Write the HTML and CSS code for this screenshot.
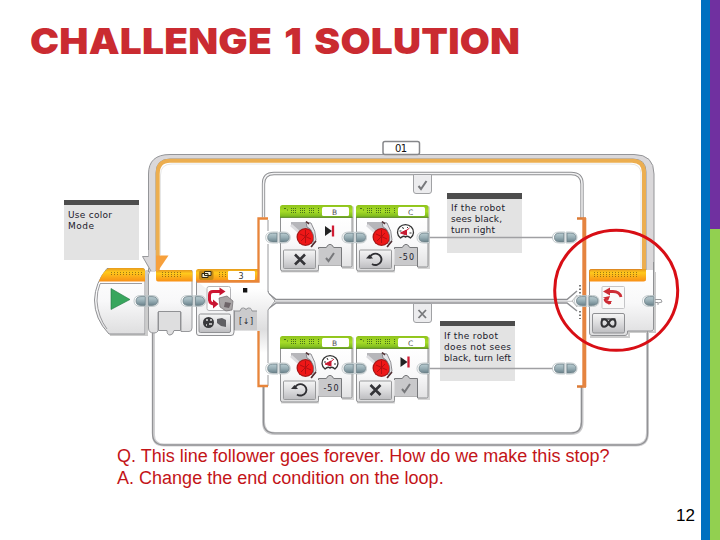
FILE: index.html
```html
<!DOCTYPE html>
<html lang="en">

<head>
    <meta charset="UTF-8">
    <meta name="viewport" content="width=device-width, initial-scale=1.0">
    <title>Challenge 1 Solution</title>
    <link rel="stylesheet" href="styles.css">
</head>

<body>
    <div class="slide">
        <main class="content">
            <h1 class="title">CHALLENGE 1 SOLUTION</h1>

            <svg class="program" viewBox="0 130 701 318" width="701" height="318">
                <defs>
                    <linearGradient id="orange" x1="0" y1="0" x2="0" y2="1">
                        <stop offset="0" stop-color="#e79a1c" />
                        <stop offset="0.3" stop-color="#ffc91c" />
                        <stop offset="1" stop-color="#f98f16" />
                    </linearGradient>
                    <linearGradient id="green" x1="0" y1="0" x2="0" y2="1">
                        <stop offset="0" stop-color="#8fc31c" />
                        <stop offset="0.5" stop-color="#a6dc28" />
                        <stop offset="1" stop-color="#76b31c" />
                    </linearGradient>
                    <linearGradient id="body" x1="0" y1="0" x2="0" y2="1">
                        <stop offset="0" stop-color="#ffffff" />
                        <stop offset="0.5" stop-color="#f8f8f9" />
                        <stop offset="1" stop-color="#dededf" />
                    </linearGradient>
                    <linearGradient id="button" x1="0" y1="0" x2="0" y2="1">
                        <stop offset="0" stop-color="#f6f6f6" />
                        <stop offset="0.5" stop-color="#dcdcde" />
                        <stop offset="1" stop-color="#bdbdc0" />
                    </linearGradient>
                    <linearGradient id="neck" x1="0" y1="0" x2="0" y2="1">
                        <stop offset="0.42" stop-color="#ffffff" />
                        <stop offset="0.66" stop-color="#dededf" />
                        <stop offset="0.8" stop-color="#ffffff" />
                    </linearGradient>
                    <linearGradient id="metal" x1="0" y1="0" x2="0" y2="1">
                        <stop offset="0" stop-color="#b9ccd1" />
                        <stop offset="0.5" stop-color="#97adb4" />
                        <stop offset="1" stop-color="#6b838c" />
                    </linearGradient>
                    <pattern id="dots" width="3" height="2" patternUnits="userSpaceOnUse">
                        <rect width="1" height="1" fill="#5b4a10" opacity="0.6" />
                    </pattern>

                    <!-- connector halves, origin is the joint -->
                    <g id="plug-left">
                        <path d="M-.7-5.5H-6Q-13-5.5-13 0T-6 5.5H-.7Z" fill="#fff" stroke="#a9b4b8" stroke-width=".7" />
                        <path d="M-1.7-4.4H-6Q-11-4.4-11 0T-6 4.4H-1.7Z" fill="url(#metal)" stroke="#6d8088" stroke-width=".8" />
                    </g>
                    <g id="plug-right">
                        <path d="M.7-5.5H5Q11.5-5.5 11.5 0T5 5.5H.7Z" fill="#fff" stroke="#a9b4b8" stroke-width=".7" />
                        <path d="M1.5-4.4H5Q10.5-4.4 10.5 0T5 4.4H1.5Z" fill="url(#metal)" stroke="#6d8088" stroke-width=".8" />
                    </g>
                    <g id="plug">
                        <use href="#plug-left" />
                        <use href="#plug-right" />
                    </g>

                    <!-- large motor block -->
                    <g id="motor">
                        <path d="M1 67.5V3Q1 1 3 1H72Q74 1 74 3V64H62V61H39V67.5H2Z" fill="#999" opacity=".4" />
                        <path d="M.5 12H72V60.500Q72 62 70.500 62H61.500V60H38.500V64.500Q38.500 66 37 66H2.500Q.5 66 .5 64Z" fill="url(#body)" stroke="#8f9092" />
                        <path d="M38.500 60V42.500H46Q47 42.500 47.500 40.500Q50 38 52.500 40.500Q53 42.500 54 42.500H61.500V60Z" fill="#c9c9cb" />
                        <path d="M38.500 44V42.500H46Q47 42.500 47.500 40.500Q50 38 52.500 40.500Q53 42.500 54 42.500H61.500V62" fill="none" stroke="#77787b" />
                        <path d="M0 12.500V2.500Q0 0 2.500 0H70Q72.500 0 72.500 2.500V12.500Z" fill="url(#green)" />
                        <path d="M0 12.300H72.500" stroke="#5d8d25" />
                        <path d="M4 3.500H6M7 5H8" stroke="#47701a" />
                        <path d="M11 3.500H17M20 3.500H26M29 3.500H35M38 3.500H39M11 5.500H17M20 5.500H26M29 5.500H35M38 5.500H39M11 7.500H17M20 7.500H26M29 7.500H35M38 7.500H39" stroke="#47701a" stroke-width="1" stroke-dasharray="1 1" />
                        <rect x="42" y="2" width="27" height="9" rx="1.500" fill="#fff" />
                        <path d="M11 17H28L32 26 20 30 16 25 11 21Z" fill="#b6b6ba" />
                        <path d="M11 20 20 28" stroke="#dcdcdf" stroke-width="3" />
                        <circle cx="25.500" cy="32" r="9" fill="#a31818" />
                        <circle cx="25.500" cy="32" r="7.800" fill="#ee1717" />
                        <path d="M20 29 31 34M21 36 29 28M25.500 25V38" stroke="#b50f12" stroke-width="1" />
                        <path d="M26 17 31 18Q36 26 36 35L31.500 42Q35 34 33 29Q31 23 27 22Z" fill="#e6e6e9" stroke="#77777c" stroke-width=".8" />
                        <path d="M26 16.500 29 19M36 36 31 42" stroke="#4f2c2f" stroke-width="1.500" />
                        <rect x="3.500" y="45" width="32" height="18.500" rx="1" fill="url(#button)" stroke="#98999b" />
                    </g>
                    <path id="cross" d="M-5-5 5 5M5-5-5 5" fill="none" stroke="#343438" stroke-width="2.600" />
                    <path id="tick" d="M-4 1-1.500 4 4-4" fill="none" stroke="#77787b" stroke-width="2" />
                    <g id="rotate">
                        <path d="M-5.500-1A6 5.700 0 1 1-3 4.500" fill="none" stroke="#303034" stroke-width="1.900" />
                        <path d="M-9-1H-2L-5.500-5Z" fill="#303034" />
                    </g>
                    <g id="stop-icon">
                        <path d="M-5-5 2 0-5 5Z" fill="#222" />
                        <path d="M3-5.500V5.500" stroke="#d01c34" stroke-width="2.300" />
                    </g>
                    <g id="gauge">
                        <path d="M-5 6A8 7.500 0 1 1 5 6Q2 3 0 5Q-2 3-5 6Z" fill="#fff" stroke="#333" stroke-width="1.300" />
                        <path d="M-5 1 1-2V3ZM-2 1 4-4" fill="#c71b32" stroke="#c71b32" />
                        <path d="M-6-1H-4M-3-5-2-3M2-5V-4M4 1H6" stroke="#333" stroke-width="1" fill="none" />
                    </g>
                </defs>

                <!-- outer loop -->
                <path d="M153.500 331V435Q153.500 445 164 445H636Q647.500 445 647.500 433V330" fill="none" stroke="#d0d0d2" stroke-width="3" />
                <path d="M152.500 331V433Q152.500 445 164 445H636Q647.500 445 647.500 433V330" fill="none" stroke="#939396" stroke-width="1.300" />
                <path d="M148.500 272V174Q148.500 154.500 170 154.500H634Q654 154.500 654 174V300H646V172Q646 159 633 159H170Q156 159 156 173V272Z" fill="#dad8da" stroke="#949598" />
                <path d="M157.700 272V174Q157.700 160.800 170 160.800H632Q644 160.800 644 173V272" fill="none" stroke="#ecae50" stroke-width="4" />
                <path d="M160.500 255V175Q160.500 164 172 164H630Q641 164 641 174V268" fill="none" stroke="#e6e6e6" />

                <rect x="383" y="141.500" width="36.500" height="13" rx="2" fill="#fff" stroke="#86878a" stroke-width="1.500" />
                <text class="port port-loop" x="395" y="152" textLength="12">01</text>

                <!-- switch frames -->
                <g fill="none" stroke="#8e8f92">
                    <path d="M263.500 218V184Q263.500 173.500 274 173.500H571Q582 173.500 582 184V218" stroke-width="3.300" />
                    <path d="M263.500 218V184Q263.500 173.500 274 173.500H571Q582 173.500 582 184V218" stroke="#f3f3f4" stroke-width="1.500" />
                    <path d="M263.500 387V422Q263.500 433.500 275 433.500H571Q582 433.500 582 422V387" stroke="#c9c9cb" stroke-width="3" />
                    <path d="M263.500 387V422Q263.500 433 275 433H571Q581.500 433 581.500 422V387" stroke-width="1.200" />
                    <path d="M268 291V293L276 299.500H567L577 291M268 309 276 303H567L577 311" stroke-width="1.500" />
                    <path d="M275 301.300H574" stroke="#c4c4c6" />
                </g>
                <path d="M572 301 577 295V307Z" fill="#eee" stroke="#aaa" stroke-width=".7" />
                <path d="M580 285V297M580 311V319" stroke="#777" stroke-width="2" stroke-dasharray="1.500 2" />

                <path d="M413.500 174.500H431.500V191Q431.500 193.500 429 193.500H416Q413.500 193.500 413.500 191Z" fill="#ececee" stroke="#a0a1a4" />
                <use href="#tick" x="422.500" y="185" />
                <path d="M413.500 303.500H431.500V320Q431.500 322.500 429 322.500H416Q413.500 322.500 413.500 320Z" fill="#ececee" stroke="#a0a1a4" />
                <path d="M418.500 310 426 318M426 310 418.500 318" stroke="#77787b" stroke-width="1.800" />

                <!-- comments -->
                <g class="comment">
                    <rect x="64" y="200" width="75" height="60" fill="#e3e3e3" />
                    <rect x="64" y="200" width="75" height="5" fill="#4d4d4d" />
                    <text x="68" y="218" textLength="44">Use color</text>
                    <text x="68" y="229" textLength="26">Mode</text>
                </g>
                <g class="comment">
                    <rect x="447" y="193" width="75" height="60" fill="#e3e3e3" />
                    <rect x="447" y="193" width="75" height="6" fill="#4d4d4d" />
                    <text x="451" y="211" textLength="54">If the robot</text>
                    <text x="451" y="222" textLength="51">sees black,</text>
                    <text x="451" y="233" textLength="44">turn right</text>
                </g>
                <g class="comment">
                    <rect x="440" y="321" width="75" height="60" fill="#e3e3e3" />
                    <rect x="440" y="321" width="75" height="5" fill="#4d4d4d" />
                    <text x="444" y="339" textLength="54">If the robot</text>
                    <text x="444" y="350" textLength="67">does not sees</text>
                    <text x="444" y="361" textLength="67">black, turn left</text>
                </g>
                <path d="M428 237.500H554M428 368.500H554" stroke="#a0a0a3" stroke-width="1.300" />

                <!-- start block -->
                <path d="M110 335H147V270" fill="none" stroke="#ccc" stroke-width="2" />
                <path d="M107 268.500H142Q145 268.500 145 271V334H109Q94.500 319 94.500 300Q95 283 107 268.500Z" fill="url(#body)" stroke="#909194" />
                <path d="M99 281.500Q101 275 106 270Q108 268 110 268H142Q145 268 145 271V281.500Z" fill="url(#orange)" />
                <path d="M100 283.500H142M100 284Q97 291 97 301Q98 317 107 329" fill="none" stroke="#9c9c9f" />
                <rect x="111" y="271" width="31" height="5" fill="url(#dots)" />
                <path d="M111 288.500 130 299.500 111 309.500Z" fill="#38a65d" stroke="#237743" stroke-width=".6" />

                <!-- loop start -->
                <path d="M148.500 275Q149 270.500 153 270.500H192V328Q192 331.500 189 331.500H181V312H158V331Q157 333 154 333Q148.500 333 148.500 328Z" fill="url(#body)" stroke="#98999c" />
                <path d="M156 270H190Q192.500 270 192.500 272V281.500H158Q156 281.500 156 279Z" fill="url(#orange)" />
                <path d="M142.500 256.500H148.500V250H155.500V272H150.500Z" fill="#dad8da" />
                <path d="M142.500 256.500H148.500M142.500 256.500 151 271" fill="none" stroke="#98999c" />
                <path d="M156 255.500H168.500L158 271H156Z" fill="#f7a03b" />
                <rect x="160" y="272" width="23" height="5" fill="url(#dots)" />
                <path d="M158.500 311.500H180.500V330.500H174Q173 335 170 335T167 330.500H158.500Z" fill="#dededf" stroke="#909194" />

                <!-- colour switch -->
                <path d="M196.500 281H258V217.500H268V231Q263 237 268 244V292Q270 298 274 301Q270 305 268 311V363Q263 369 268 375V387H257.500V331H234V335.500H199Q196.500 335.500 196.500 333Z" fill="url(#neck)" />
                <path d="M268 220V231M268 244V292L275 301 268 310V363M268 375V386" fill="none" stroke="#98999c" />
                <path d="M196.500 281V333Q196.500 335.500 199 335.500H231Q234 335.500 234 332V310" fill="#f3f3f4" stroke="#909194" />
                <path d="M196 281.500V271.500Q196 269 198.500 269H258V281.500Z" fill="url(#orange)" />
                <path d="M268 218.500H258.500V281.500H197M258.500 331V386H268" fill="none" stroke="#e8853a" stroke-width="2.300" />
                <rect x="199" y="270.500" width="14.500" height="9.500" rx="2" fill="#c68b17" />
                <path d="M204.500 271.500H211V275.500H204.500ZM202 273.500H208V277.500H202Z" fill="#f5f0da" stroke="#2d2814" />
                <rect x="217" y="272" width="9" height="6" fill="url(#dots)" />
                <rect x="228" y="271" width="27" height="9" rx="1" fill="#fff" />
                <text class="port" x="238.500" y="278.500">3</text>
                <rect x="207" y="286.500" width="23.500" height="24" rx="2" fill="#fff" stroke="#b4b4b7" />
                <path d="M221 291.500H213Q209.500 291.500 209.500 295V300Q210 304 215 304" fill="none" stroke="#cf1733" stroke-width="3" />
                <path d="M219.500 287.500 225.500 291.500 219.500 295.500ZM213 299.500 218.500 304 213 308.500Z" fill="#c71532" />
                <path d="M219 298 227 296 233 301 232 310 226 311 220 307Z" fill="#a9a6a7" stroke="#706c6e" stroke-width=".7" />
                <path d="M225 302 231 303 229 308 224 307Z" fill="#6d6468" />
                <rect x="243" y="288" width="4.300" height="4.500" fill="#111" />
                <rect x="199" y="314" width="31.500" height="18.500" rx="1.500" fill="url(#button)" stroke="#909194" />
                <circle cx="208.500" cy="322.500" r="5.500" fill="#39393c" />
                <path d="M206 320H208M209 324H212M206 325H207M210 320H212" stroke="#ddd" stroke-width="1.500" />
                <path d="M217 319 222 318 226 320V327L221 326 217 323Z" fill="#606064" />
                <path d="M234.500 330V311H240Q241 307.500 243.500 309Q246 307.500 247 309Q250 307.500 251 311H257V330Z" fill="#cbcbcd" />
                <path d="M234.500 330V311H240Q241 307 244 308Q246 311 248 308Q251 307 252 311H257" fill="none" stroke="#909194" />
                <text class="value" x="239" y="324" textLength="14">[↓]</text>

                <!-- motor blocks -->
                <use href="#motor" x="280" y="205" />
                <use href="#motor" x="356" y="205" />
                <use href="#motor" x="280" y="336" />
                <use href="#motor" x="356" y="336" />
                <text class="port port-motor" x="332" y="214.500">B</text>
                <text class="port port-motor" x="408" y="214.500">C</text>
                <text class="port port-motor" x="332" y="345.500">B</text>
                <text class="port port-motor" x="408" y="345.500">C</text>
                <use href="#stop-icon" x="330" y="231" />
                <use href="#gauge" x="405.500" y="232" />
                <use href="#gauge" x="330" y="363" />
                <use href="#stop-icon" x="405.500" y="362" />
                <use href="#cross" x="300" y="259.500" />
                <use href="#rotate" x="375" y="259.500" />
                <use href="#rotate" x="300" y="390" />
                <use href="#cross" x="375.500" y="390" />
                <use href="#tick" x="330" y="257" />
                <use href="#tick" x="406" y="388" />
                <text class="value" x="399" y="259.500" textLength="15">-50</text>
                <text class="value" x="323.500" y="390.500" textLength="15">-50</text>

                <!-- switch end -->
                <path d="M577 218.500H586M577 386.500H586" stroke="#dc7b36" stroke-width="2.500" />
                <path d="M584.300 218V387" stroke="#e58440" stroke-width="4" />

                <!-- loop end -->
                <path d="M590 337H629V332H655V272" fill="none" stroke="#ccc" stroke-width="2" />
                <path d="M589.500 281H645.500V270H653.500V329Q653.500 331 651 331H627.500V333Q627.500 335.500 625 335.500H592Q589.500 335.500 589.500 333Z" fill="url(#body)" />
                <path d="M589.500 281V333Q589.500 335.500 592 335.500H625Q627.500 335.500 627.500 333V331H651Q653.500 331 653.500 329V262" fill="none" stroke="#909194" />
                <path d="M589 281.500V271.500Q589 269 591.500 269H646V279Q646 281.500 643.500 281.500Z" fill="url(#orange)" />
                <path d="M589.500 281V271.500Q589.500 269.500 591.500 269.500H642" fill="none" stroke="#df8a22" />
                <rect x="594" y="272" width="45" height="5" fill="url(#dots)" />
                <rect x="602" y="286.500" width="22.500" height="22" rx="1" fill="#fafafa" stroke="#c5c5c8" />
                <path d="M608 291.500H613Q619.500 291.500 621 297M605 299Q605 303 611 302.500" fill="none" stroke="#cd2c35" stroke-width="2.800" />
                <path d="M603 291.500 610 287.500V295.500ZM603 297.500 610 296 608 301ZM606 301H612L609 305Z" fill="#cd2c35" />
                <rect x="592.500" y="313.500" width="32" height="19.500" rx="1.500" fill="url(#button)" stroke="#8f9093" />
                <path d="M608.500 323C606 318 601.500 318 601.500 323S606 328 608.500 323S615.500 318 615.500 323S611 328 608.500 323Z" fill="none" stroke="#333336" stroke-width="2" />
                <path d="M601 319H615.500" stroke="#333336" stroke-width="1.300" />
                <path d="M647.500 331V345" stroke="#98999c" />

                <!-- connectors -->
                <use href="#plug" x="147" y="301" />
                <use href="#plug" x="194" y="301" />
                <use href="#plug" x="278.700" y="237.500" />
                <use href="#plug" x="355" y="237.500" />
                <use href="#plug-left" x="430" y="237.500" />
                <use href="#plug" x="565.500" y="237.500" />
                <use href="#plug" x="278.700" y="368.500" />
                <use href="#plug" x="355" y="368.500" />
                <use href="#plug-left" x="430" y="368.500" />
                <use href="#plug" x="565.500" y="368.500" />
                <use href="#plug" x="587.500" y="301" />
                <use href="#plug-left" x="655.500" y="301" />
                <path d="M655 299.500H661L662 302 658 303V305M655 302.500H658" fill="none" stroke="#9a9b9e" />

                <!-- highlight -->
                <ellipse cx="616.200" cy="290.300" rx="61.500" ry="60" fill="none" stroke="#d80e15" stroke-width="3" />
            </svg>

            <div class="answer">
                <p class="line-q">Q. This line follower goes forever. How do we make this stop?</p>
                <p class="line-a">A. Change the end condition on the loop.</p>
            </div>
            <footer class="page-number">12</footer>
        </main>
        <div class="stripe-blue"></div>
        <div class="stripe-side">
            <div class="stripe-purple"></div>
            <div class="stripe-green"></div>
        </div>
    </div>
</body>

</html>
```
FILE: styles.css
```css
body {
    margin: 0;
    background-color: white;
    font-family: "Liberation Sans", Arial, sans-serif;
}

.slide {
    display: flex;
    width: 720px;
    height: 540px;
    overflow: hidden;
}

.content {
    width: 701px;
    display: flex;
    flex-direction: column;
}

.title {
    box-sizing: border-box;
    height: 130px;
    margin: 0;
    padding: 19px 0 0 30px;
    font-family: "Arial Black", Inter, sans-serif;
    font-size: 36px;
    font-weight: 900;
    line-height: 44px;
    letter-spacing: 0.2px;
    word-spacing: 4px;
    white-space: nowrap;
    color: #ca2b31;
    /* widens the letters without changing their height */
    transform: scaleX(1.08);
    transform-origin: 30px 0;
}

.program {
    display: block;
    flex: none;
}

.program text {
    font-family: "DejaVu Sans", sans-serif;
    font-size: 9px;
    fill: #1c1a2c;
}

.program .port {
    font-size: 8px;
    fill: #333;
}

.program .port-loop {
    font-size: 10px;
    fill: #111;
}

.program .port-motor {
    font-size: 7.5px;
    fill: #555;
}

.program .value {
    font-size: 8px;
}

.answer {
    height: 58px;
    padding-left: 117px;
    margin-top: -3px;
    font-size: 18px;
    line-height: 22px;
    letter-spacing: 0.01px;
    color: #c31418;
    white-space: nowrap;
}

.answer p {
    margin: 0;
}

.page-number {
    padding-right: 6px;
    font-size: 17px;
    line-height: 26px;
    text-align: right;
    color: #000;
}

.stripe-blue {
    width: 9px;
    background-color: #0070c0;
}

.stripe-side {
    width: 10px;
    display: flex;
    flex-direction: column;
}

.stripe-purple {
    height: 229px;
    background-color: #7030a0;
}

.stripe-green {
    flex: 1;
    background-color: #92d050;
}
```
